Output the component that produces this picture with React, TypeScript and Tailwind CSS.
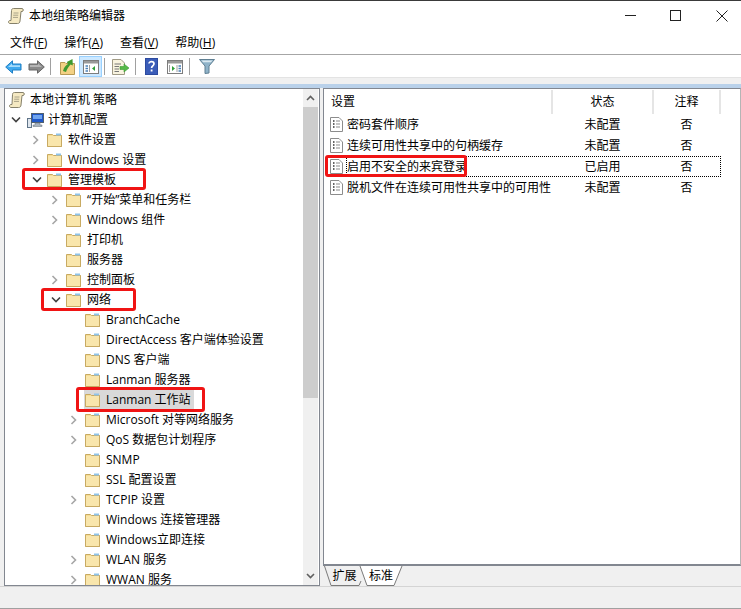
import React from "react";

const FONT = "[font-family:'Open_Sans','Noto_Sans_CJK_SC',sans-serif]";

function Scroll({ className = "" }: { className?: string }) {
  return (
    <svg width="16" height="16" viewBox="0 0 16 16" className={className}>
      <path d="M3.5 2.5 C3.5 1 4.5 0.5 5.5 0.5 H14 C15.7 0.5 15.7 3.5 14 3.5 H13 L12 13 C11.9 14.7 11 15.5 9.5 15.5 H2 C0 15.5 0 12.5 2 12.5 H3 Z" fill="#f5e9c2" stroke="#85806a" strokeWidth="1" />
      <path d="M5.5 5 H10.5 M5.2 7.2 H10.2 M5 9.4 H10" stroke="#a8a288" strokeWidth="1" />
    </svg>
  );
}

function Folder() {
  return (
    <svg width="15" height="14" viewBox="0 0 15 14">
      <path d="M0.5 1.5 H5.5 L6.5 2.5 H14.5 V13.5 H0.5 Z" fill="#f6dd94" stroke="#c8aa62" />
      <rect x="1" y="3" width="13" height="10" fill="#f9e6ac" />
      <rect x="9" y="0.5" width="5" height="2" fill="#8ec4ea" />
      <path d="M14.5 2.5 V13.5 H0.5" fill="none" stroke="#c8aa62" />
    </svg>
  );
}

function DocIcon() {
  return (
    <svg width="13" height="15" viewBox="0 0 13 15">
      <path d="M0.5 0.5 H9 L12.5 4 V14.5 H0.5 Z" fill="#fff" stroke="#8c8c8c" />
      <path d="M3 4 H4.5 M3 7 H4.5 M3 10 H4.5" stroke="#333" strokeWidth="1.4" />
      <path d="M6 4 H10 M6 7 H10 M6 10 H10" stroke="#8b8b8b" />
    </svg>
  );
}

function Chevron({ open }: { open?: boolean }) {
  return open ? (
    <svg width="10" height="8" viewBox="0 0 10 8">
      <path d="M1 1.5 L5 5.5 L9 1.5" fill="none" stroke="#404040" strokeWidth="1.6" />
    </svg>
  ) : (
    <svg width="8" height="10" viewBox="0 0 8 10">
      <path d="M1.5 1 L5.5 5 L1.5 9" fill="none" stroke="#a6a6a6" strokeWidth="1.6" />
    </svg>
  );
}

function Computer() {
  return (
    <svg width="17" height="16" viewBox="0 0 17 16">
      <rect x="0.5" y="6.5" width="4" height="9" fill="#dfe6ee" stroke="#5f7488" />
      <rect x="4.5" y="1.5" width="12" height="9" fill="#1f57c9" stroke="#51606e" />
      <rect x="6" y="3" width="9" height="4" fill="#6fa4ee" />
      <path d="M8 11 H13 V13 H15 V14.5 H6 V13 H8 Z" fill="#a9b4bf" stroke="#66727d" strokeWidth="0.5" />
    </svg>
  );
}

function Back() {
  return (
    <svg width="17" height="14" viewBox="0 0 17 14">
      <path d="M0.7 7 L7.5 0.8 V4 H16 V10 H7.5 V13.2 Z" fill="#3fa9ee" stroke="#1f7fc4" />
      <path d="M3 7 L7 3.5 V5.2 H15 V7 Z" fill="#a6dcfb" />
    </svg>
  );
}

function Forward() {
  return (
    <svg width="17" height="14" viewBox="0 0 17 14">
      <path d="M16.3 7 L9.5 0.8 V4 H1 V10 H9.5 V13.2 Z" fill="#8a8a8a" stroke="#666" />
      <path d="M2 5 H10 V3.5 L14 7 H2 Z" fill="#b5b5b5" />
    </svg>
  );
}

function UpFolder() {
  return (
    <svg width="15" height="17" viewBox="0 0 15 17">
      <path d="M0.5 4.5 H5 L6 5.5 H14.5 V16.5 H0.5 Z" fill="#f3d184" stroke="#b89a55" />
      <path d="M3 13 C4 9 6 7 8 6 L6.8 4 L12.5 1 L12.8 7.5 L10.5 6.6 C9 8.5 7 11 6 14 Z" fill="#3f9a2f" />
    </svg>
  );
}

function PanelIcon({ right }: { right?: boolean }) {
  return (
    <svg width="16" height="14" viewBox="0 0 16 14">
      <rect x="0.5" y="0.5" width="15" height="13" fill="#fff" stroke="#7d7d7d" />
      <rect x="1" y="1" width="14" height="2.5" fill="#9a9a9a" />
      {right ? (
        <>
          <path d="M5 6 L8 8.5 L5 11 Z" fill="#2e9e38" />
          <path d="M2.5 5 V12 M10 5 V12" stroke="#a0a0a0" />
          <path d="M11.5 6 H14 M11.5 8.5 H14 M11.5 11 H14" stroke="#4a7fb5" strokeWidth="1.3" />
        </>
      ) : (
        <>
          <path d="M2.5 6 H5 M2.5 8.5 H5 M2.5 11 H5" stroke="#4a7fb5" strokeWidth="1.3" />
          <path d="M6.5 5 V12" stroke="#a0a0a0" />
          <path d="M12 6 L9 8.5 L12 11 Z" fill="#2e9e38" />
        </>
      )}
    </svg>
  );
}

function ExportIcon() {
  return (
    <svg width="18" height="16" viewBox="0 0 18 16">
      <path d="M0.5 0.5 H9 L12.5 4 V15.5 H0.5 Z" fill="#f8f3df" stroke="#a09a85" />
      <path d="M2.5 5 H9 M2.5 7.5 H7 M2.5 10 H7 M2.5 12.5 H7" stroke="#777" />
      <path d="M8 7.5 H12 V5 L17 9 L12 13 V10.5 H8 Z" fill="#55b948" stroke="#3c9a33" strokeWidth="0.6" />
    </svg>
  );
}

function HelpIcon() {
  return (
    <svg width="13" height="17" viewBox="0 0 13 17">
      <rect width="13" height="17" fill="#2c4a9f" />
      <rect x="1" y="1" width="11" height="15" fill="#3a5cb8" />
      <path d="M4 5.5 C4 3 9 3 9 5.8 C9 7.8 6.6 8 6.6 10" fill="none" stroke="#fff" strokeWidth="1.7" />
      <rect x="5.7" y="11.5" width="1.8" height="2" fill="#fff" />
    </svg>
  );
}

function FilterIcon() {
  return (
    <svg width="16" height="15" viewBox="0 0 16 15">
      <path d="M0.5 0.5 H15.5 L10 7 V14 L6 14.5 V7 Z" fill="#8fb3c9" stroke="#5f7f92" />
      <path d="M2.5 1.5 H13.5 L12 3.3 H4 Z" fill="#dbe9f1" />
    </svg>
  );
}

const Sep = () => <div className="w-px h-[17px] bg-[#a0a0a0]" />;

type Node = { label: string; level: number; chev?: "open" | "closed"; selected?: boolean };

const tree: Node[] = [
  { label: "软件设置", level: 2, chev: "closed" },
  { label: "Windows 设置", level: 2, chev: "closed" },
  { label: "管理模板", level: 2, chev: "open" },
  { label: "“开始”菜单和任务栏", level: 3, chev: "closed" },
  { label: "Windows 组件", level: 3, chev: "closed" },
  { label: "打印机", level: 3 },
  { label: "服务器", level: 3 },
  { label: "控制面板", level: 3, chev: "closed" },
  { label: "网络", level: 3, chev: "open" },
  { label: "BranchCache", level: 4 },
  { label: "DirectAccess 客户端体验设置", level: 4 },
  { label: "DNS 客户端", level: 4 },
  { label: "Lanman 服务器", level: 4 },
  { label: "Lanman 工作站", level: 4, selected: true },
  { label: "Microsoft 对等网络服务", level: 4, chev: "closed" },
  { label: "QoS 数据包计划程序", level: 4, chev: "closed" },
  { label: "SNMP", level: 4 },
  { label: "SSL 配置设置", level: 4 },
  { label: "TCPIP 设置", level: 4, chev: "closed" },
  { label: "Windows 连接管理器", level: 4 },
  { label: "Windows立即连接", level: 4 },
  { label: "WLAN 服务", level: 4, chev: "closed" },
  { label: "WWAN 服务", level: 4, chev: "closed" },
];

const levelPad: Record<number, string> = {
  2: "pl-[26px]",
  3: "pl-[45px]",
  4: "pl-[64px]",
};

function TreeRow({ n }: { n: Node }) {
  return (
    <div className={`flex items-center h-5 shrink-0 ${levelPad[n.level]}`}>
      <div className="w-[15px] flex items-center justify-start pl-[1px]">
        {n.chev && <Chevron open={n.chev === "open"} />}
      </div>
      <div className={`flex items-center h-5 ${n.selected ? "bg-[#d9d9d9]" : ""} pl-[1px] pr-[3px]`}>
        <Folder />
        <span className="ml-[6px] whitespace-nowrap">{n.label}</span>
      </div>
    </div>
  );
}

const settings = [
  { name: "密码套件顺序", state: "未配置" },
  { name: "连续可用性共享中的句柄缓存", state: "未配置" },
  { name: "启用不安全的来宾登录", state: "已启用" },
  { name: "脱机文件在连续可用性共享中的可用性", state: "未配置" },
];

function RedBox({ className }: { className: string }) {
  return <div className={`absolute border-[3px] border-[#f01414] rounded-[3px] pointer-events-none ${className}`} />;
}

export default function App() {
  return (
    <div className={`relative w-[741px] h-[609px] overflow-hidden bg-[#f0f0f0] text-[12px] leading-5 text-black ${FONT}`}>
      {/* title */}
      <div className="flex items-center h-[30px] bg-white border-t border-[#3a3a3a] pl-2">
        <Scroll />
        <span className="ml-[5px]">本地组策略编辑器</span>
        <div className="ml-auto flex items-center">
          <svg width="11" height="11" viewBox="0 0 11 11" className="mr-[34px]"><path d="M0 5.5 H11" stroke="#222" /></svg>
          <svg width="11" height="11" viewBox="0 0 11 11" className="mr-[35px]"><rect x="0.5" y="0.5" width="10" height="10" fill="none" stroke="#222" /></svg>
          <svg width="12" height="12" viewBox="0 0 12 12" className="mr-[13px]"><path d="M0.5 0.5 L11.5 11.5 M11.5 0.5 L0.5 11.5" stroke="#222" /></svg>
        </div>
      </div>
      {/* menu */}
      <div className="flex items-center h-[25px] bg-white border-b border-[#a6a6a6] pl-[10px] pt-[2px] gap-[17px]">
        <span>文件(<span className="underline">F</span>)</span>
        <span>操作(<span className="underline">A</span>)</span>
        <span>查看(<span className="underline">V</span>)</span>
        <span>帮助(<span className="underline">H</span>)</span>
      </div>
      {/* toolbar */}
      <div className="flex items-center h-[23px] bg-white border-b border-[#e3e3e3] pl-[5px] pt-[1px]">
        <Back />
        <div className="ml-[6px]"><Forward /></div>
        <div className="ml-[5px]"><Sep /></div>
        <div className="ml-[9px]"><UpFolder /></div>
        <div className="ml-[4px] w-[23px] h-[21px] flex items-center justify-center bg-[#cce8ff] border border-[#99d1ff]"><PanelIcon /></div>
        <div className="ml-[2px]"><Sep /></div>
        <div className="ml-[7px]"><ExportIcon /></div>
        <div className="ml-[5px]"><Sep /></div>
        <div className="ml-[9px]"><HelpIcon /></div>
        <div className="ml-[9px]"><PanelIcon right /></div>
        <div className="ml-[6px]"><Sep /></div>
        <div className="ml-[9px]"><FilterIcon /></div>
      </div>
      <div className="h-[6px]" />
      <div className="h-1 bg-[#b9d1ea]" />
      {/* main */}
      <div className="flex h-[498px] pl-1">
        {/* left */}
        <div className="flex w-[316px] h-full bg-white border border-[#828790]">
          <div className="flex-1 min-w-0 h-full overflow-hidden pt-[1px]">
            <div className="flex flex-col">
              <div className="flex items-center h-5 pl-[4px]">
                <Scroll />
                <span className="ml-[5px]">本地计算机 策略</span>
              </div>
              <div className="flex items-center h-5 pl-[6px]">
                <div className="w-[13px] flex justify-start"><Chevron open /></div>
                <div className="ml-[3px]"><Computer /></div>
                <span className="ml-[4px]">计算机配置</span>
              </div>
              {tree.map((n) => <TreeRow key={n.label} n={n} />)}
            </div>
          </div>
          <div className="flex flex-col w-[15px] mr-[1px] bg-[#f0f0f0]">
            <div className="h-[18px] flex items-center justify-center">
              <svg width="9" height="6" viewBox="0 0 9 6"><path d="M1 5 L4.5 1.5 L8 5" fill="none" stroke="#606060" strokeWidth="1.6" /></svg>
            </div>
            <div className="h-[291px] bg-[#cdcdcd]" />
            <div className="flex-1" />
            <div className="h-[18px] flex items-center justify-center">
              <svg width="9" height="6" viewBox="0 0 9 6"><path d="M1 1 L4.5 4.5 L8 1" fill="none" stroke="#606060" strokeWidth="1.6" /></svg>
            </div>
          </div>
        </div>
        {/* right */}
        <div className="flex flex-col w-[418px] h-full ml-[3px]">
          <div className="h-[478px] bg-white border-t border-l border-r border-b-2 border-[#828790] border-r-[#b5b5b5]">
            <div className="flex h-[25px] items-center">
              <div className="w-[229px] pl-[7px] h-[24px] border-r-2 border-[#e5e5e5] flex items-center">设置</div>
              <div className="w-[101px] h-[24px] border-r-2 border-[#e5e5e5] flex items-center justify-center">状态</div>
              <div className="w-[67px] h-[24px] border-r-2 border-[#e5e5e5] flex items-center justify-center">注释</div>
            </div>
            <div className="flex flex-col">
              {settings.map((s) => (
                <div key={s.name} className="flex items-center h-[21px]">
                  <div className="w-[228px] flex items-center pl-[6px] shrink-0">
                    <DocIcon />
                    <span className="ml-[4px] whitespace-nowrap">{s.name}</span>
                  </div>
                  <div className="w-[101px] text-center">{s.state}</div>
                  <div className="w-[67px] text-center">否</div>
                </div>
              ))}
            </div>
          </div>
          <div className="flex items-start pl-[1px]">
            <div className="relative w-[38px] h-[20px] flex items-center justify-center">
              <svg width="38" height="20" viewBox="0 0 38 20" className="absolute inset-0">
                <path d="M0.5 0 L7 19.5 H35 L37 15" fill="#f0f0f0" stroke="#7a7a7a" />
              </svg>
              <span className="relative pl-[3px]">扩展</span>
            </div>
            <div className="relative w-[45px] h-[20px] -ml-[3px] flex items-center justify-center">
              <svg width="45" height="20" viewBox="0 0 45 20" className="absolute inset-0">
                <path d="M1 0 L8 19.5 H35 L43 0" fill="#fff" stroke="#7a7a7a" />
              </svg>
              <span className="relative pr-[1px]">标准</span>
            </div>
          </div>
        </div>
      </div>
      {/* status */}
      <div className="h-[23px] bg-[#f0f0f0] border-t border-[#d4d4d4] border-b border-b-[#a0a0a0]" />

      {/* focus rect of the selected row */}
      <div className="absolute left-[346px] top-[156px] w-[375px] h-[21px] border border-dotted border-black pointer-events-none" />
      {/* annotations */}
      <RedBox className="left-[22px] top-[168px] w-[124px] h-[22px]" />
      <RedBox className="left-[41px] top-[288px] w-[95px] h-[23px]" />
      <RedBox className="left-[76px] top-[387px] w-[129px] h-[25px]" />
      <RedBox className="left-[325px] top-[155px] w-[142px] h-[22px]" />
    </div>
  );
}
